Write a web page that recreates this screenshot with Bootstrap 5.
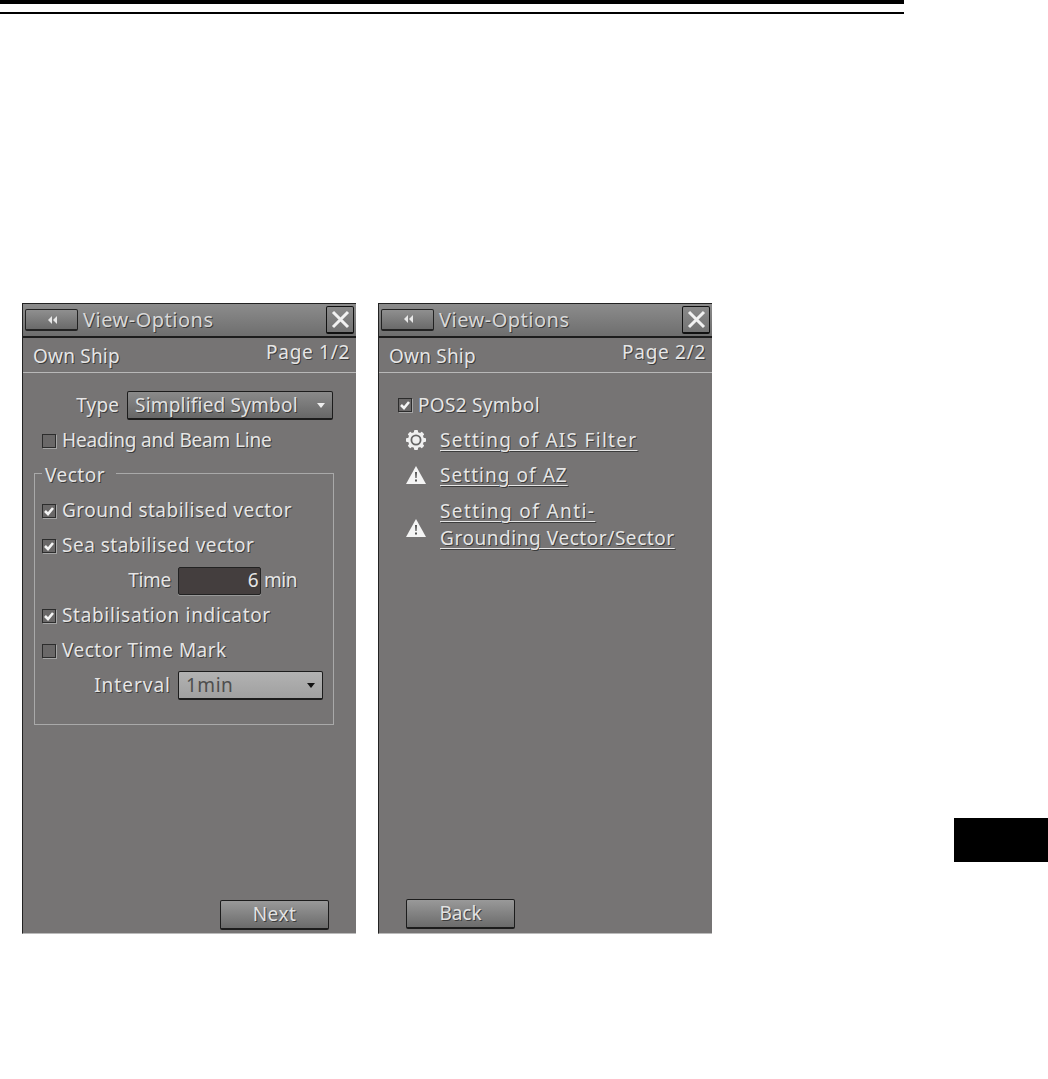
<!DOCTYPE html>
<html lang="en">
<head>
<meta charset="utf-8">
<title>View-Options</title>
<link href="https://cdn.jsdelivr.net/npm/bootstrap@5.3.0/dist/css/bootstrap.min.css" rel="stylesheet">
<style>
body{margin:0;width:1048px;height:1079px;overflow:hidden;background:#fff;font-family:"Noto Sans",sans-serif;}
.head-thick{width:904px;height:4px;background:#000;}
.head-thin{width:904px;height:2px;background:#000;margin-top:8px;}
.stage{margin-top:289px;padding-left:22px;}
.vo-panel{width:334px;height:631px;background:#767474;border-left:1px solid #222;border-top:1px solid #222;border-bottom:1px solid #bbb;color:#e6e6e6;font-size:19px;letter-spacing:.5px;line-height:1;text-shadow:1px 1px 0 #3c3c3c;}
.vo-panel+.vo-panel{margin-left:22px;}
.vo-title{height:34px;background:linear-gradient(#8c8c8c,#6e6e6e);border-bottom:2px solid #1c1c1c;padding:0 2px;color:#d8d8d8;font-size:20px;letter-spacing:.5px;}
.vo-back{width:53px;height:22px;background:linear-gradient(#8f8f8f,#6a6a6a);border:1px solid #222;border-bottom-width:2px;border-radius:2px;margin-right:5px;}
.vo-close{width:28px;height:28px;background:linear-gradient(#8a8a8a,#737373);border:1px solid #111;border-bottom-width:2px;border-radius:2px;margin-left:auto;}
.vo-sub{height:35px;border-bottom:1px solid #b8b8b8;padding:0 6px 0 10px;}
.vo-own{padding-top:9px;letter-spacing:.2px;}
.vo-page{padding-top:5px;letter-spacing:.7px;}
.vo-body{padding-top:15px;height:527px;}
.vo-row{height:35px;}
.chk{width:14px;height:14px;flex:none;background:#6a6868;border:1px solid #2c2c2c;box-shadow:1px 1px 0 #a5a5a5;margin-right:6px;}
.chk svg{display:block;}
.rows-a{padding-left:19px;}
.lbl-type{width:96px;text-align:right;margin-right:8px;letter-spacing:.1px;}
.dd{height:29px;border:1px solid #1c1c1c;border-bottom-width:2px;border-radius:2px;padding:0 7px;background:linear-gradient(#8a8a8a,#676767);color:#e2e2e2;}
.dd-type{width:206px;}
.dd-int{width:145px;background:linear-gradient(#b2b2b2,#a0a0a0);color:#4e4e4e;text-shadow:none;}
.caret-s{margin-left:auto;}
.vec-box{margin:15px 0 0 11px;width:300px;height:252px;border:1px solid #a9a9a9;position:relative;padding:19px 0 0 7px;}
.vec-legend{position:absolute;top:-8px;left:7px;background:#767474;padding:0 11px 0 3px;}
.lbl-time{width:129px;text-align:right;margin-right:7px;}
.time-in{width:83px;height:28px;background:#443e3e;border:1px solid #222;border-radius:2px;padding-right:1px;margin-right:3px;box-shadow:0 1px 0 #999;}
.vo-btn{width:109px;height:30px;background:linear-gradient(#999,#6b6b6b);border:1px solid #1c1c1c;border-bottom-width:2px;border-radius:2px;color:#e2e2e2;}
.foot-next{margin:0 0 3px 197px;}
.foot-back{margin:0 0 4px 27px;}
.vo-link{color:#e6e6e6;text-decoration:underline;text-underline-offset:3px;text-decoration-thickness:1px;}
.link-row{padding-left:26px;}
.link-ico{width:22px;flex:none;margin-right:13px;}
.link-tall{height:70px;line-height:27px;}
.link-tall .vo-link{margin-top:-5px;}
.rows-b{padding-left:19px;}
.side-tab{width:94px;height:44px;background:#000;margin:515px 0 0 auto;}
.ls-heading{letter-spacing:-.17px;}
.ls-symbol{letter-spacing:.2px;}
.ls-stab{letter-spacing:.68px;}
.ls-time{letter-spacing:-.3px;}
.ls-interval{letter-spacing:1px;}
.ls-min{letter-spacing:-.4px;}
.ls-pos{letter-spacing:.3px;}
.ls-ais{letter-spacing:1.3px;}
.ls-az{letter-spacing:1.05px;}
.ls-anti{letter-spacing:1.4px;}
.ls-ground{letter-spacing:.56px;}
.ls-back{letter-spacing:-.1px;}
</style>
</head>
<body>
<div class="head-thick"></div>
<div class="head-thin"></div>
<div class="stage d-flex align-items-start">

  <section class="vo-panel d-flex flex-column">
    <div class="vo-title d-flex align-items-center">
      <div class="vo-back d-flex align-items-center justify-content-center"><svg width="10" height="8" viewBox="0 0 10 8"><path d="M5 0 1 4l4 4zM10 0 6 4l4 4z" fill="#e8e8e8"/></svg></div>
      <span>View-Options</span>
      <div class="vo-close d-flex align-items-center justify-content-center"><svg width="19" height="19" viewBox="0 0 19 19"><path d="M2 2 17 17M17 2 2 17" stroke="#f2f2f2" stroke-width="3"/></svg></div>
    </div>
    <div class="vo-sub d-flex justify-content-between align-items-start">
      <span class="vo-own">Own Ship</span><span class="vo-page">Page 1/2</span>
    </div>
    <div class="vo-body flex-grow-1">
      <div class="vo-row d-flex align-items-center">
        <span class="lbl-type">Type</span>
        <div class="dd dd-type d-flex align-items-center"><span class="ls-symbol">Simplified Symbol</span><svg class="caret-s" width="8" height="5" viewBox="0 0 8 5"><path d="M0 0h8L4 5z" fill="#eee"/></svg></div>
      </div>
      <div class="vo-row rows-a d-flex align-items-center"><span class="chk"></span><span class="ls-heading">Heading and Beam Line</span></div>
      <div class="vec-box">
        <span class="vec-legend">Vector</span>
        <div class="vo-row d-flex align-items-center"><span class="chk"><svg width="12" height="12" viewBox="0 0 12 12"><path d="M2 6l3 3 5-6" fill="none" stroke="#f4f4f4" stroke-width="2.6"/></svg></span><span>Ground stabilised vector</span></div>
        <div class="vo-row d-flex align-items-center"><span class="chk"><svg width="12" height="12" viewBox="0 0 12 12"><path d="M2 6l3 3 5-6" fill="none" stroke="#f4f4f4" stroke-width="2.6"/></svg></span><span>Sea stabilised vector</span></div>
        <div class="vo-row d-flex align-items-center"><span class="lbl-time ls-time">Time</span><div class="time-in d-flex align-items-center justify-content-end"><span>6</span></div><span class="ls-min">min</span></div>
        <div class="vo-row d-flex align-items-center"><span class="chk"><svg width="12" height="12" viewBox="0 0 12 12"><path d="M2 6l3 3 5-6" fill="none" stroke="#f4f4f4" stroke-width="2.6"/></svg></span><span class="ls-stab">Stabilisation indicator</span></div>
        <div class="vo-row d-flex align-items-center"><span class="chk"></span><span>Vector Time Mark</span></div>
        <div class="vo-row d-flex align-items-center"><span class="lbl-time ls-interval">Interval</span><div class="dd dd-int d-flex align-items-center"><span>1min</span><svg class="caret-s" width="8" height="5" viewBox="0 0 8 5"><path d="M0 0h8L4 5z" fill="#111"/></svg></div></div>
      </div>
    </div>
    <div>
      <div class="vo-btn foot-next d-flex align-items-center justify-content-center">Next</div>
    </div>
  </section>

  <section class="vo-panel d-flex flex-column">
    <div class="vo-title d-flex align-items-center">
      <div class="vo-back d-flex align-items-center justify-content-center"><svg width="10" height="8" viewBox="0 0 10 8"><path d="M5 0 1 4l4 4zM10 0 6 4l4 4z" fill="#e8e8e8"/></svg></div>
      <span>View-Options</span>
      <div class="vo-close d-flex align-items-center justify-content-center"><svg width="19" height="19" viewBox="0 0 19 19"><path d="M2 2 17 17M17 2 2 17" stroke="#f2f2f2" stroke-width="3"/></svg></div>
    </div>
    <div class="vo-sub d-flex justify-content-between align-items-start">
      <span class="vo-own">Own Ship</span><span class="vo-page">Page 2/2</span>
    </div>
    <div class="vo-body flex-grow-1">
      <div class="vo-row rows-b d-flex align-items-center"><span class="chk"><svg width="12" height="12" viewBox="0 0 12 12"><path d="M2 6l3 3 5-6" fill="none" stroke="#f4f4f4" stroke-width="2.6"/></svg></span><span class="ls-pos">POS2 Symbol</span></div>
      <div class="vo-row link-row d-flex align-items-center">
        <span class="link-ico d-flex justify-content-center"><svg width="22" height="22" viewBox="0 0 22 22"><g fill="#f0f0f0"><circle cx="11" cy="11" r="8"/><rect x="9" y="1" width="4" height="20" rx="1"/><rect x="9" y="1" width="4" height="20" rx="1" transform="rotate(45 11 11)"/><rect x="9" y="1" width="4" height="20" rx="1" transform="rotate(90 11 11)"/><rect x="9" y="1" width="4" height="20" rx="1" transform="rotate(135 11 11)"/></g><circle cx="11" cy="11" r="4.6" fill="none" stroke="#666" stroke-width="1.8"/></svg></span>
        <a class="vo-link ls-ais" href="#">Setting of AIS Filter</a>
      </div>
      <div class="vo-row link-row d-flex align-items-center">
        <span class="link-ico d-flex justify-content-center"><svg width="22" height="20" viewBox="0 0 22 20"><path d="M11 1 21 19H1z" fill="#f4f4f4"/><path d="M10 7h2l-.4 6h-1.200zM10 14.500h2v2h-2z" fill="#555"/></svg></span>
        <a class="vo-link ls-az" href="#">Setting of AZ</a>
      </div>
      <div class="link-tall link-row d-flex align-items-center">
        <span class="link-ico d-flex justify-content-center"><svg width="22" height="20" viewBox="0 0 22 20"><path d="M11 1 21 19H1z" fill="#f4f4f4"/><path d="M10 7h2l-.4 6h-1.200zM10 14.500h2v2h-2z" fill="#555"/></svg></span>
        <a class="vo-link" href="#"><span class="ls-anti">Setting of Anti-</span><br><span class="ls-ground">Grounding Vector/Sector</span></a>
      </div>
    </div>
    <div>
      <div class="vo-btn foot-back d-flex align-items-center justify-content-center"><span class="ls-back">Back</span></div>
    </div>
  </section>

  <div class="side-tab"></div>
</div>
<script src="https://cdn.jsdelivr.net/npm/bootstrap@5.3.0/dist/js/bootstrap.bundle.min.js"></script>
</body>
</html>
